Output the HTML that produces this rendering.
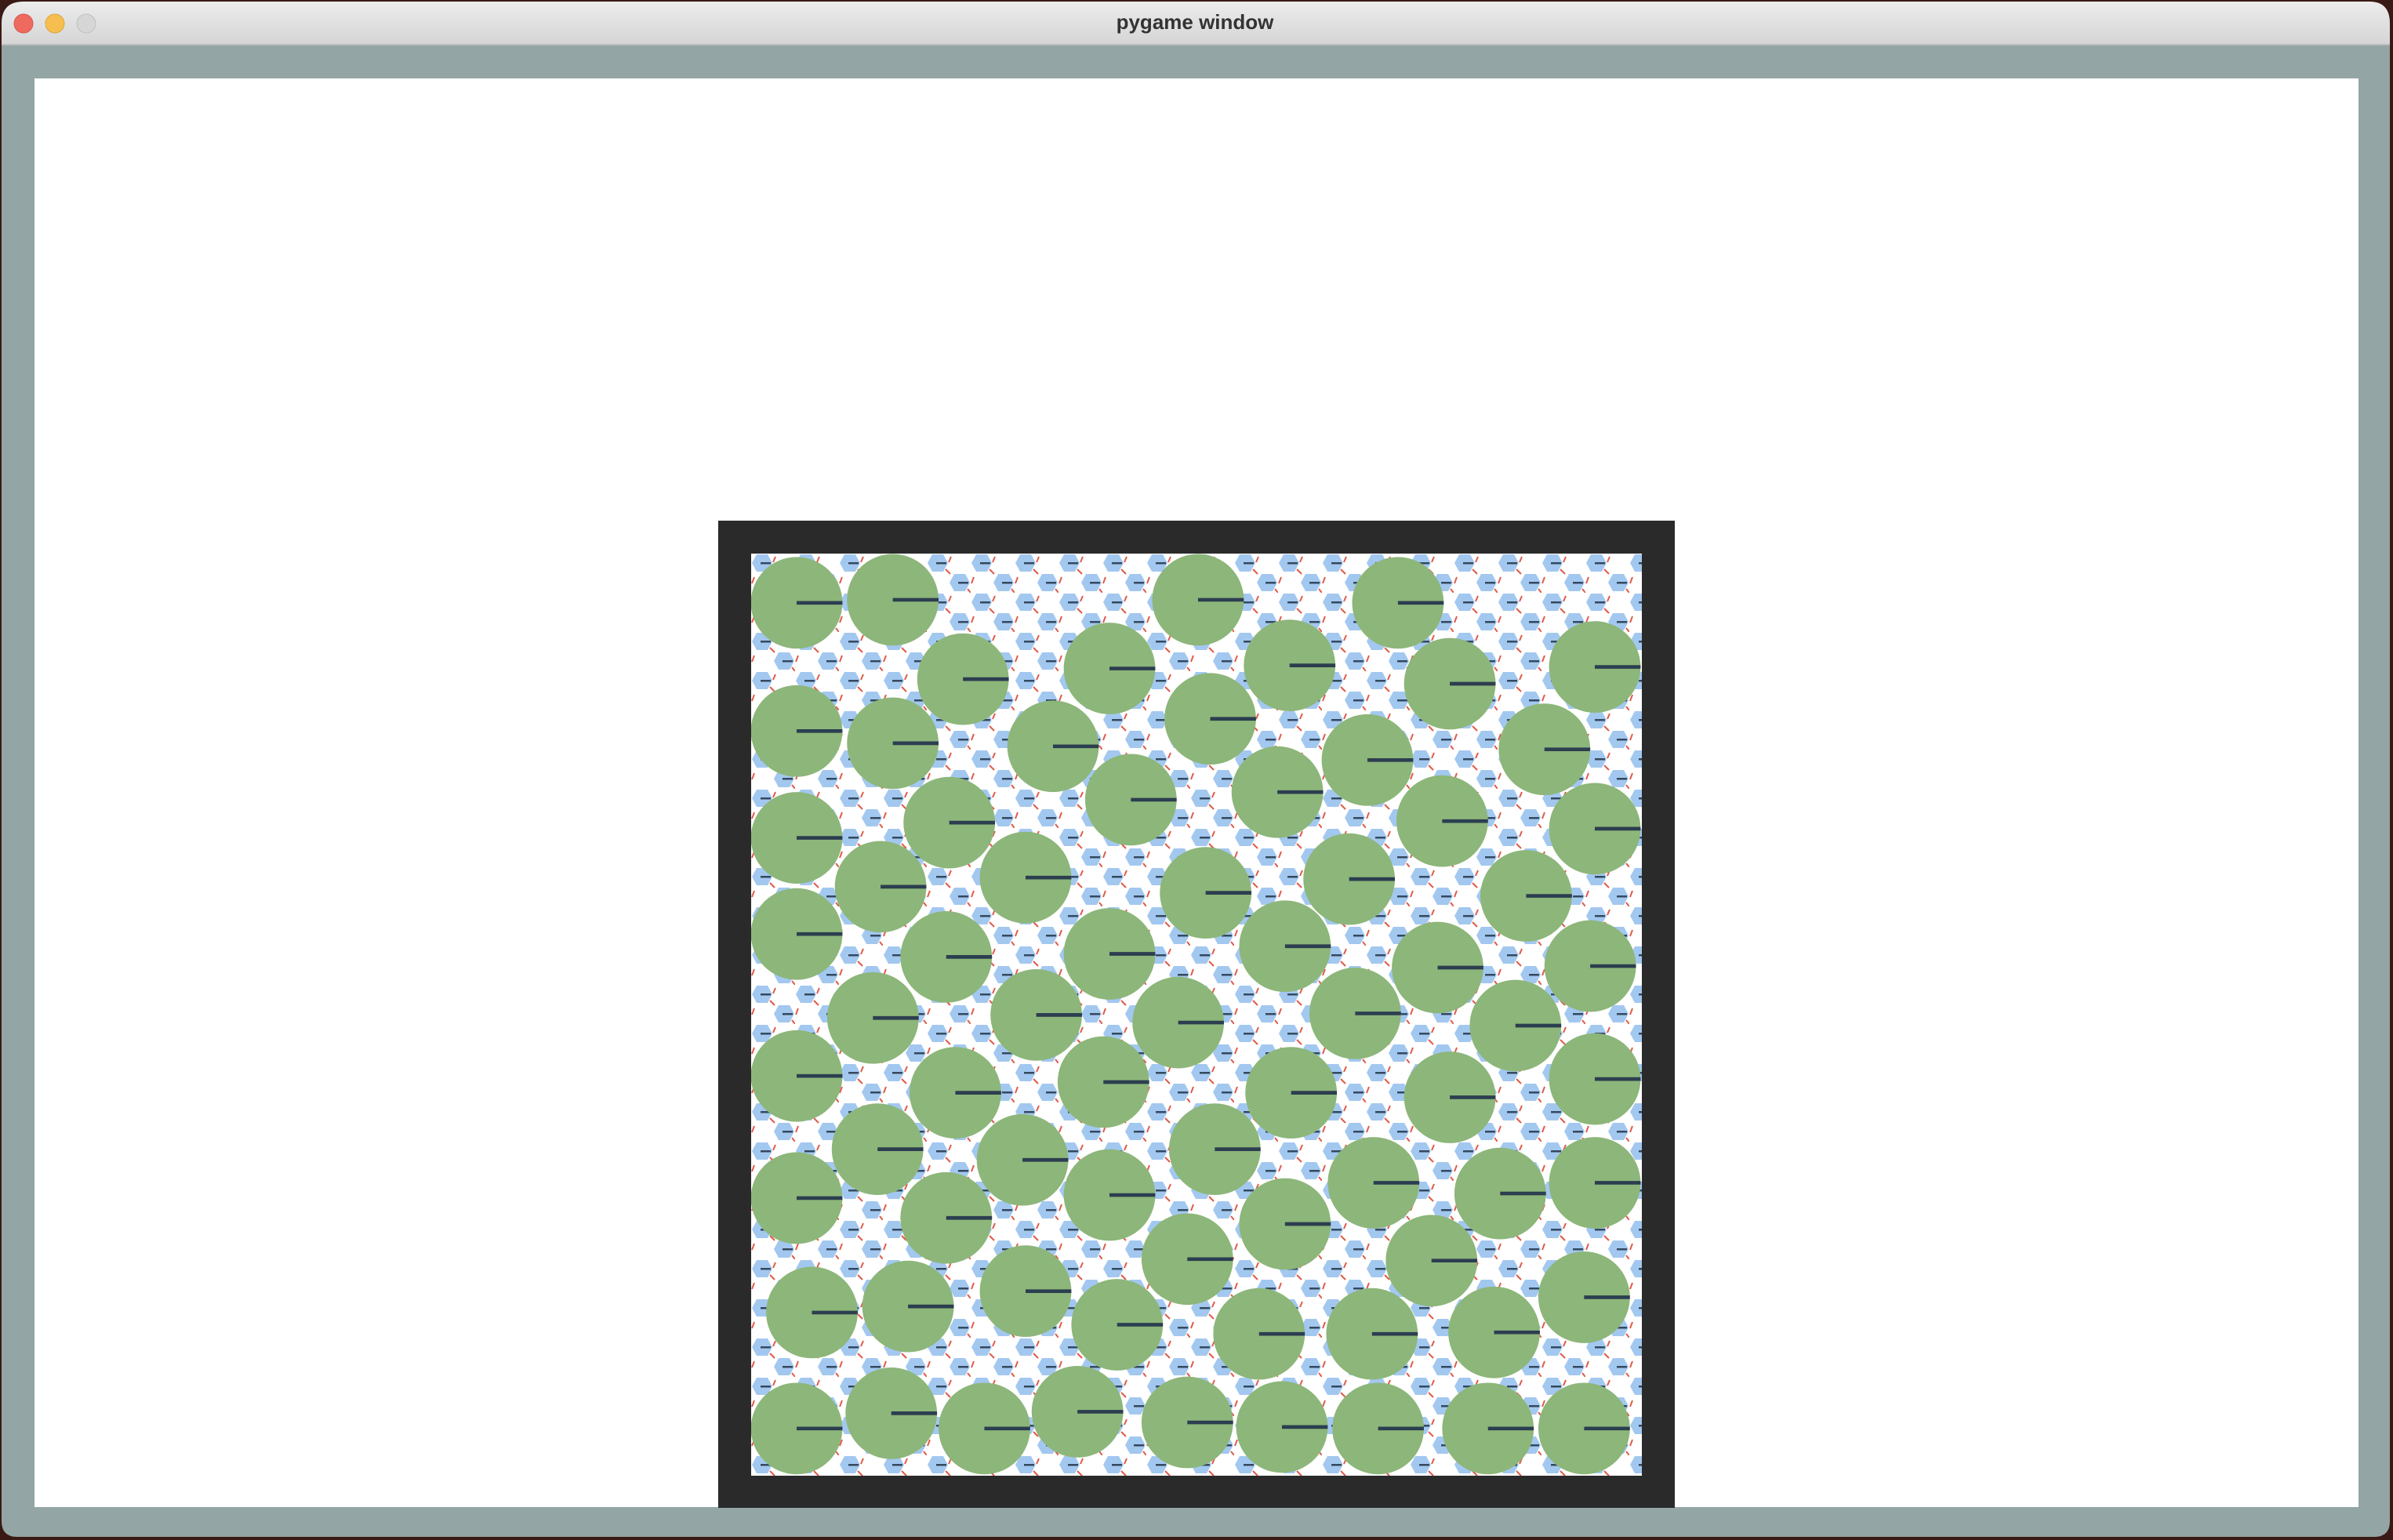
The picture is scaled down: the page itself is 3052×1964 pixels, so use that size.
<!DOCTYPE html>
<html><head><meta charset="utf-8"><style>
html,body{margin:0;padding:0;width:3052px;height:1964px;overflow:hidden;background:#3a1a14;}
</style></head><body>
<svg width="3052" height="1964" viewBox="0 0 3052 1964" xmlns="http://www.w3.org/2000/svg" style="position:absolute;left:0;top:0">
<defs>
<linearGradient id="tb" x1="0" y1="0" x2="0" y2="1"><stop offset="0" stop-color="#ececec"/><stop offset="1" stop-color="#d5d5d5"/></linearGradient>
<pattern id="hex" x="958" y="706" width="56" height="50" patternUnits="userSpaceOnUse">
<polygon points="7,1 21,1 27,12 21,23 7,23 1,12" fill="#a3c8f0"/>
<polygon points="35,26 49,26 55,37 49,48 35,48 29,37" fill="#a3c8f0"/>
<polygon points="35,-24 49,-24 55,-13 49,-2 35,-2 29,-13" fill="#a3c8f0"/>
<polygon points="7,51 21,51 27,62 21,73 7,73 1,62" fill="#a3c8f0"/>
<rect x="12" y="11" width="13" height="2.5" fill="#34495e"/>
<rect x="40" y="36" width="13" height="2.5" fill="#34495e"/>
<line x1="24" y1="20" x2="30" y2="26" stroke="#e05a4a" stroke-width="2"/>
<line x1="31" y1="4" x2="28" y2="11" stroke="#e05a4a" stroke-width="2"/>
<line x1="4" y1="30" x2="1" y2="38" stroke="#e05a4a" stroke-width="2"/>
<line x1="52" y1="45" x2="56" y2="50" stroke="#e05a4a" stroke-width="2"/>
</pattern>
<clipPath id="inner"><rect x="958" y="706" width="1136" height="1176"/></clipPath>
</defs>
<path d="M2,57 L2,30 Q2,2 30,2 L3022,2 Q3048,2 3048,30 L3048,57 Z" fill="url(#tb)"/>
<rect x="2" y="56" width="3046" height="2" fill="#bdbdbd"/>
<path d="M2,58 L3048,58 L3048,1940 Q3048,1960 3028,1960 L22,1960 Q2,1960 2,1940 Z" fill="#93a5a5"/>
<circle cx="30" cy="30" r="12" fill="#ee6a5f" stroke="#d9574c" stroke-width="1"/>
<circle cx="70" cy="30" r="12" fill="#f5be4f" stroke="#dba540" stroke-width="1"/>
<circle cx="110" cy="30" r="12" fill="#d6d6d6" stroke="#c0c0c0" stroke-width="1"/>
<text x="1524" y="37" text-anchor="middle" font-family="Liberation Sans, sans-serif" font-weight="bold" font-size="26" fill="#333">pygame window</text>
<rect x="44" y="100" width="2964" height="1822" fill="#fff"/>
<rect x="916" y="664" width="1220" height="1259" fill="#2a2a2a"/>
<rect x="958" y="706" width="1136" height="1176" fill="#fff"/>
<g clip-path="url(#inner)">
<rect x="958" y="706" width="1136" height="1176" fill="url(#hex)"/>
<g transform="scale(1.9464)" fill="#8db67a">
<circle cx="522" cy="395" r="30"/><circle cx="585" cy="393" r="30"/><circle cx="785" cy="393" r="30"/><circle cx="916" cy="395" r="30"/>
<circle cx="631" cy="445" r="30"/><circle cx="727" cy="438" r="30"/><circle cx="845" cy="436" r="30"/><circle cx="950" cy="448" r="30"/><circle cx="1045" cy="437" r="30"/>
<circle cx="522" cy="479" r="30"/><circle cx="585" cy="487" r="30"/><circle cx="690" cy="489" r="30"/><circle cx="793" cy="471" r="30"/><circle cx="896" cy="498" r="30"/><circle cx="1012" cy="491" r="30"/>
<circle cx="741" cy="524" r="30"/><circle cx="837" cy="519" r="30"/>
<circle cx="522" cy="549" r="30"/><circle cx="622" cy="539" r="30"/><circle cx="945" cy="538" r="30"/><circle cx="1045" cy="543" r="30"/>
<circle cx="577" cy="581" r="30"/><circle cx="672" cy="575" r="30"/><circle cx="790" cy="585" r="30"/><circle cx="884" cy="576" r="30"/><circle cx="1000" cy="587" r="30"/>
<circle cx="522" cy="612" r="30"/><circle cx="620" cy="627" r="30"/><circle cx="727" cy="625" r="30"/><circle cx="842" cy="620" r="30"/><circle cx="942" cy="634" r="30"/><circle cx="1042" cy="633" r="30"/>
<circle cx="572" cy="667" r="30"/><circle cx="679" cy="665" r="30"/><circle cx="772" cy="670" r="30"/><circle cx="888" cy="664" r="30"/><circle cx="993" cy="672" r="30"/>
<circle cx="522" cy="705" r="30"/><circle cx="626" cy="716" r="30"/><circle cx="723" cy="709" r="30"/><circle cx="846" cy="716" r="30"/><circle cx="950" cy="719" r="30"/><circle cx="1045" cy="707" r="30"/>
<circle cx="575" cy="753" r="30"/><circle cx="670" cy="760" r="30"/><circle cx="796" cy="753" r="30"/><circle cx="900" cy="775" r="30"/><circle cx="983" cy="782" r="30"/><circle cx="1045" cy="775" r="30"/>
<circle cx="522" cy="785" r="30"/><circle cx="620" cy="798" r="30"/><circle cx="727" cy="783" r="30"/><circle cx="842" cy="802" r="30"/><circle cx="938" cy="826" r="30"/><circle cx="778" cy="825" r="30"/>
<circle cx="532" cy="860" r="30"/><circle cx="595" cy="856" r="30"/><circle cx="672" cy="846" r="30"/><circle cx="732" cy="868" r="30"/><circle cx="825" cy="874" r="30"/><circle cx="899" cy="874" r="30"/><circle cx="979" cy="873" r="30"/><circle cx="1038" cy="850" r="30"/>
<circle cx="522" cy="936" r="30"/><circle cx="584" cy="926" r="30"/><circle cx="645" cy="936" r="30"/><circle cx="706" cy="925" r="30"/><circle cx="778" cy="932" r="30"/><circle cx="840" cy="935" r="30"/><circle cx="903" cy="936" r="30"/><circle cx="975" cy="936" r="30"/><circle cx="1038" cy="936" r="30"/>
<g stroke="#2c3e50" stroke-width="2.4">
<path d="M522 395h30M585 393h30M785 393h30M916 395h30M631 445h30M727 438h30M845 436h30M950 448h30M1045 437h30M522 479h30M585 487h30M690 489h30M793 471h30M896 498h30M1012 491h30M741 524h30M837 519h30M522 549h30M622 539h30M945 538h30M1045 543h30M577 581h30M672 575h30M790 585h30M884 576h30M1000 587h30M522 612h30M620 627h30M727 625h30M842 620h30M942 634h30M1042 633h30M572 667h30M679 665h30M772 670h30M888 664h30M993 672h30M522 705h30M626 716h30M723 709h30M846 716h30M950 719h30M1045 707h30M575 753h30M670 760h30M796 753h30M900 775h30M983 782h30M1045 775h30M522 785h30M620 798h30M727 783h30M842 802h30M938 826h30M778 825h30M532 860h30M595 856h30M672 846h30M732 868h30M825 874h30M899 874h30M979 873h30M1038 850h30M522 936h30M584 926h30M645 936h30M706 925h30M778 932h30M840 935h30M903 936h30M975 936h30M1038 936h30"/>
</g>
</g>
</g>
</svg>
</body></html>
